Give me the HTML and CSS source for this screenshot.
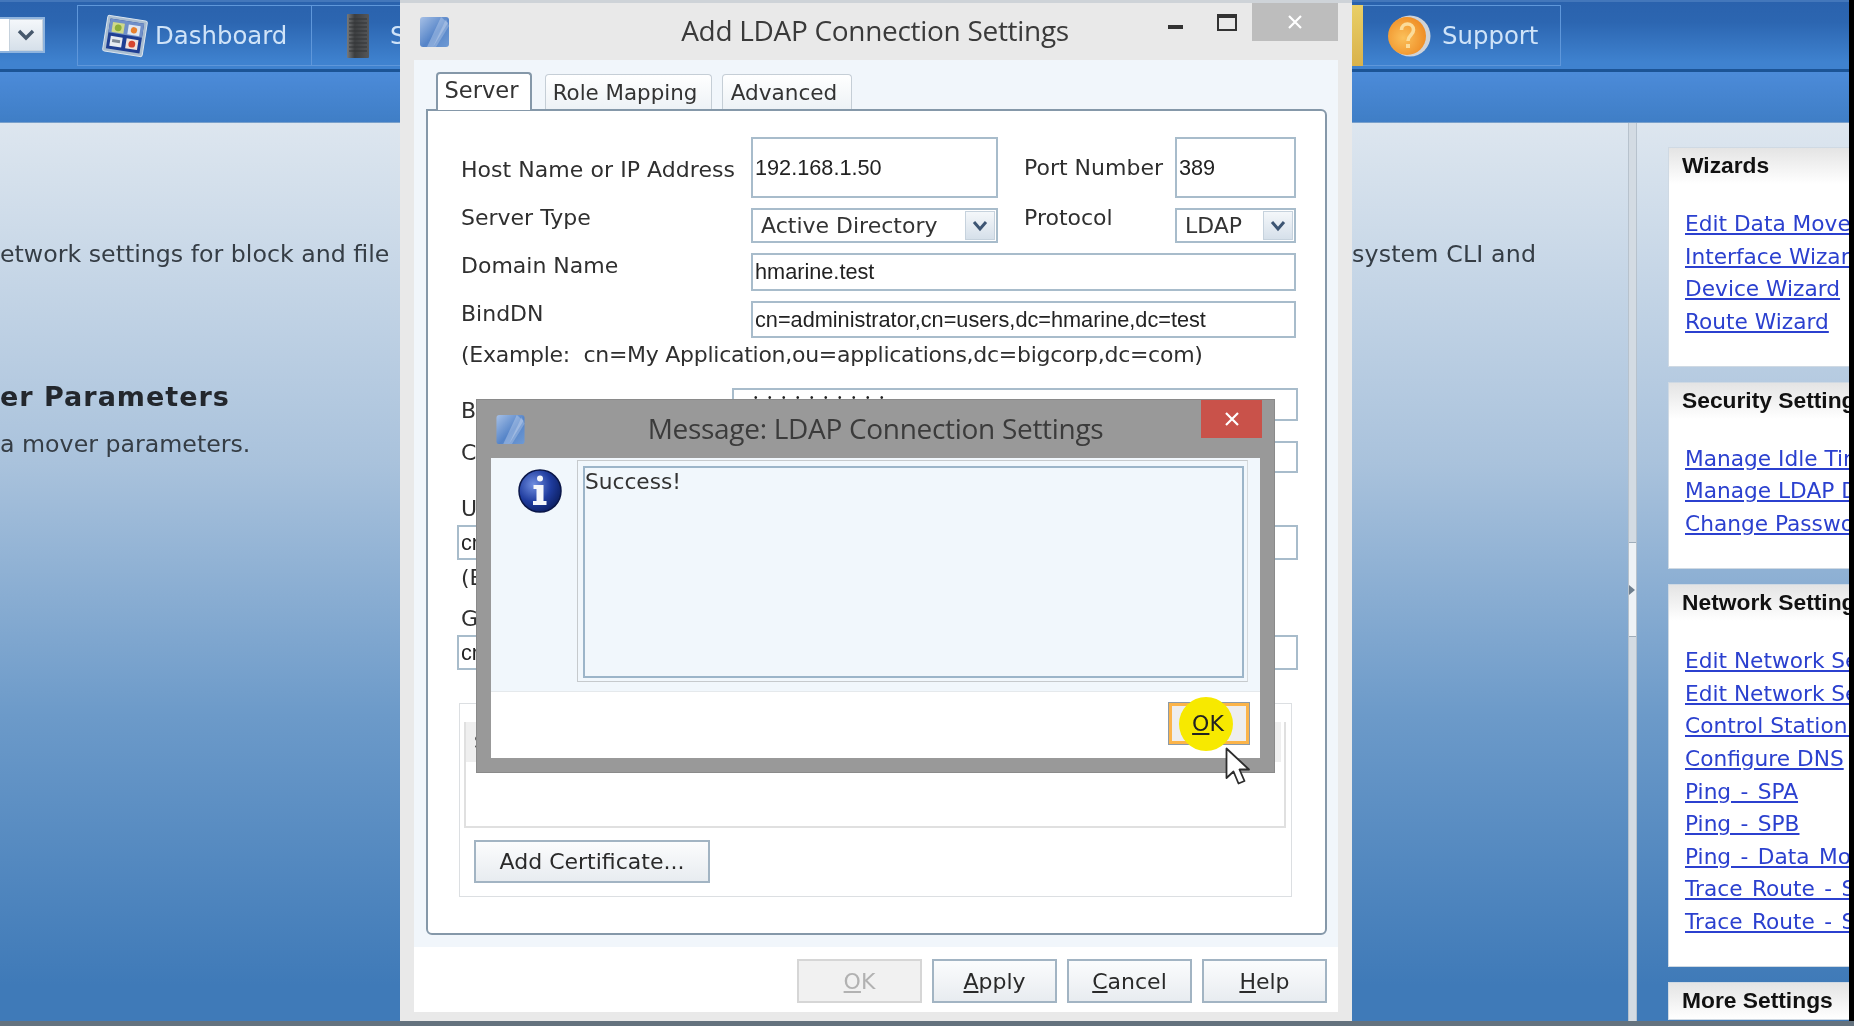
FILE: index.html
```html
<!DOCTYPE html>
<html lang="en">
<head>
<meta charset="utf-8">
<title>Add LDAP Connection Settings</title>
<link rel="stylesheet" href="styles.css">
</head>
<body>
<div class="desktop">
  <div class="stage">
    <div class="screen">
      <header class="topbar">
        <div class="combo"><span class="combo-field"></span><span class="arrow-btn combo-btn"><svg width="18" height="12" viewBox="0 0 18 12"><path d="M2 2l7 7 7-7" fill="none" stroke="#46586c" stroke-width="3.4"/></svg></span></div>
        <nav class="nav">
          <a class="nav-item nav-dash">
            <svg class="nav-icon" width="46" height="46" viewBox="0 0 46 46">
              <g transform="rotate(9 23 23)">
                <rect x="3" y="5" width="40" height="36" rx="2" fill="#a9bdd0" stroke="#dbe5ef"/>
                <rect x="6" y="8" width="34" height="30" fill="#1f3f93"/>
                <rect x="6" y="8" width="34" height="14" fill="#6f8fc8"/>
                <rect x="9" y="11" width="12" height="10" fill="#cfd98a"/><circle cx="15" cy="16" r="3.4" fill="#8cae3a"/>
                <rect x="25" y="11" width="12" height="10" fill="#dfe7f2"/><circle cx="31" cy="16" r="3.2" fill="#e8812f"/>
                <rect x="9" y="25" width="12" height="10" fill="#e6ebf2"/><rect x="11" y="28" width="8" height="3" fill="#7c8796"/>
                <rect x="25" y="25" width="12" height="10" fill="#f0e3dc"/><circle cx="31" cy="30" r="3.4" fill="#d8472f"/>
              </g>
            </svg>
            <span>Dashboard</span>
          </a>
          <a class="nav-item nav-storage">
            <svg class="nav-icon" width="24" height="46" viewBox="0 0 24 46">
              <defs><linearGradient id="srv" x1="0" x2="1" y1="0" y2="0"><stop offset="0" stop-color="#77797b"/><stop offset=".35" stop-color="#3c3e40"/><stop offset="1" stop-color="#55575a"/></linearGradient></defs>
              <rect x="1" y="1" width="22" height="44" rx="1" fill="url(#srv)"/>
              <path d="M3 6h18M3 10h18M3 14h18M3 18h18M3 22h18M3 26h18M3 30h18M3 34h18M3 38h18" stroke="#333537" stroke-width="1"/>
            </svg>
            <span>Storage</span>
          </a>
          <span class="nav-active-edge"></span>
          <a class="nav-item nav-support">
            <svg class="nav-icon" width="44" height="44" viewBox="0 0 44 44">
              <defs><radialGradient id="sup" cx=".4" cy=".55" r=".65"><stop offset="0" stop-color="#fbc05a"/><stop offset="1" stop-color="#ee8a22"/></radialGradient></defs>
              <circle cx="23" cy="22" r="20.5" fill="#cfd3d8"/>
              <circle cx="20" cy="22" r="19" fill="url(#sup)"/>
              <path d="M14.5 16c0-8 12-8 12 0 0 5-5.500 5-5.500 11" fill="none" stroke="#fbdc9a" stroke-width="3.600"/>
              <rect x="19" y="30" width="4" height="4" fill="#fbdc9a"/>
            </svg>
            <span>Support</span>
          </a>
        </nav>
      </header>
      <div class="subbar"></div>
      <main class="main">
        <section class="content">
          <div class="content-left">
            <p class="desc desc-top">etwork settings for block and file</p>
            <h2 class="heading">er Parameters</h2>
            <p class="desc">a mover parameters.</p>
          </div>
          <div class="content-right">
            <p class="desc desc-top">system CLI and</p>
          </div>
        </section>
        <div class="splitter"><span class="splitter-handle"><i class="splitter-arrow"></i></span></div>
        <aside class="side">
          <section class="panel">
            <h3 class="panel-title">Wizards</h3>
            <ul class="links">
              <li><a>Edit Data Mover Names</a></li>
              <li><a>Interface Wizard</a></li>
              <li><a>Device Wizard</a></li>
              <li><a>Route Wizard</a></li>
            </ul>
          </section>
          <section class="panel">
            <h3 class="panel-title">Security Settings</h3>
            <ul class="links">
              <li><a>Manage Idle Timeout</a></li>
              <li><a>Manage LDAP Domain</a></li>
              <li><a>Change Password</a></li>
            </ul>
          </section>
          <section class="panel">
            <h3 class="panel-title">Network Settings</h3>
            <ul class="links">
              <li><a>Edit Network Settings - SPA</a></li>
              <li><a>Edit Network Settings - SPB</a></li>
              <li><a>Control Station Properties</a></li>
              <li><a>Configure DNS</a></li>
              <li class="spaced"><a>Ping - SPA</a></li>
              <li class="spaced"><a>Ping - SPB</a></li>
              <li class="spaced"><a>Ping - Data Mover</a></li>
              <li class="spaced"><a>Trace Route - SPA</a></li>
              <li class="spaced"><a>Trace Route - SPB</a></li>
            </ul>
          </section>
          <section class="panel">
            <h3 class="panel-title">More Settings</h3>
          </section>
        </aside>
      </main>
    </div>
    <div class="edge"></div>
  </div>
  <div class="statusbar"></div>

  <div class="window ldap-window">
    <div class="titlebar">
      <svg class="app-icon" width="31" height="32" viewBox="0 0 31 32">
        <defs><linearGradient id="ico" x1="0" y1="0" x2="1" y2="1"><stop offset="0" stop-color="#a6c0e6"/><stop offset=".55" stop-color="#5584c8"/><stop offset="1" stop-color="#6f9ad4"/></linearGradient></defs>
        <rect x="1" y="1" width="29" height="30" rx="3" fill="url(#ico)"/>
        <path d="M22 1L8 31h6L29 7z" fill="#dfeaf8" opacity=".32"/>
        <path d="M27 3L14 31h3L30 10z" fill="#eef4fb" opacity=".25"/>
      </svg>
      <div class="window-title">Add LDAP Connection Settings</div>
      <div class="controls">
        <span class="ctl-min"></span>
        <span class="ctl-max"></span>
        <span class="ctl-close"><svg width="18" height="18" viewBox="0 0 18 18"><path d="M3 3l12 12M15 3L3 15" stroke="#fff" stroke-width="2.200"/></svg></span>
      </div>
    </div>
    <div class="window-body">
      <div class="tabs">
        <span class="tab tab-active">Server</span>
        <span class="tab tab-role">Role Mapping</span>
        <span class="tab tab-adv">Advanced</span>
      </div>
      <div class="tabpane">
        <div class="form-grid">
          <label class="lbl lbl-host">Host Name or IP Address</label>
          <div class="field">192.168.1.50</div>
          <label class="lbl lbl-port">Port Number</label>
          <div class="field">389</div>

          <label class="lbl lbl-up">Server Type</label>
          <div class="select"><span>Active Directory</span><span class="arrow-btn"><svg width="16" height="12" viewBox="0 0 16 12"><path d="M2 2l6 7 6-7" fill="none" stroke="#3d5573" stroke-width="3"/></svg></span></div>
          <label class="lbl lbl-up lbl-proto">Protocol</label>
          <div class="select"><span>LDAP</span><span class="arrow-btn"><svg width="16" height="12" viewBox="0 0 16 12"><path d="M2 2l6 7 6-7" fill="none" stroke="#3d5573" stroke-width="3"/></svg></span></div>

          <label class="lbl lbl-mid">Domain Name</label>
          <div class="field span3">hmarine.test</div>

          <label class="lbl lbl-mid">BindDN</label>
          <div class="field span3">cn=administrator,cn=users,dc=hmarine,dc=test</div>
        </div>
        <p class="lbl example">(Example:&nbsp; cn=My Application,ou=applications,dc=bigcorp,dc=com)</p>
        <div class="pw-row pw-row-first">
          <label class="lbl">BindDN Password</label>
          <div class="field field-dots">••••••••••</div>
        </div>
        <div class="pw-row pw-row-second">
          <label class="lbl">Confirm Password</label>
          <div class="field"></div>
        </div>
        <label class="lbl lbl-user">User Search Path</label>
        <div class="field wide">cn=users,dc=hmarine,dc=test</div>
        <p class="lbl lbl-ex">(Example: cn=users,dc=bigcorp,dc=com)</p>
        <label class="lbl lbl-group">Group Search Path</label>
        <div class="field wide">cn=users,dc=hmarine,dc=test</div>
        <fieldset class="group">
          <div class="table">
            <div class="table-head">Subject</div>
          </div>
          <button class="btn btn-cert">Add Certificate...</button>
        </fieldset>
      </div>
    </div>
    <footer class="window-footer">
      <button class="btn btn-foot btn-disabled"><u>O</u>K</button>
      <button class="btn btn-foot"><u>A</u>pply</button>
      <button class="btn btn-foot"><u>C</u>ancel</button>
      <button class="btn btn-foot"><u>H</u>elp</button>
    </footer>
  </div>

  <div class="window msg-window">
    <div class="msg-titlebar">
      <svg class="app-icon msg-icon" width="31" height="31" viewBox="0 0 31 32">
        <rect x="1" y="1" width="29" height="30" rx="3" fill="url(#ico)"/>
        <path d="M22 1L8 31h6L29 7z" fill="#dfeaf8" opacity=".32"/>
        <path d="M27 3L14 31h3L30 10z" fill="#eef4fb" opacity=".25"/>
      </svg>
      <div class="msg-title">Message: LDAP Connection Settings</div>
      <div class="msg-controls">
        <span class="msg-close"><svg width="18" height="18" viewBox="0 0 18 18"><path d="M3 3l12 12M15 3L3 15" stroke="#fff" stroke-width="2.200"/></svg></span>
      </div>
    </div>
    <div class="msg-upper">
      <div class="msg-iconcol">
        <svg width="44" height="44" viewBox="0 0 44 44">
          <defs><radialGradient id="inf" cx=".35" cy=".35" r=".75"><stop offset="0" stop-color="#6f8ee0"/><stop offset=".55" stop-color="#1f3c9e"/><stop offset="1" stop-color="#0a1c5c"/></radialGradient></defs>
          <circle cx="22" cy="22" r="21" fill="url(#inf)" stroke="#0a1648" stroke-width="1.500"/>
          <circle cx="22" cy="9.500" r="3" fill="#f4f7fb"/>
          <path d="M15.500 16h10v16h3v4h-13.500v-4h3.500v-12h-3z" fill="#f4f7fb"/>
        </svg>
      </div>
      <div class="msg-textwrap"><div class="msg-text">Success!</div></div>
    </div>
    <div class="msg-lower">
      <button class="btn-ok">
        <span class="halo"></span>
        <span class="btn-ok-label"><u>O</u>K</span>
      </button>
    </div>
  </div>

  <svg class="cursor" width="28" height="42" viewBox="0 0 28 42">
    <path d="M1.500 1.500V31l7-6.500 5 12 6-2.500-5-11.500H24z" fill="#fff" stroke="#2d2d2d" stroke-width="1.800" stroke-linejoin="round"/>
  </svg>
</div>
</body>
</html>
```

FILE: styles.css
```css
* { box-sizing: border-box; }
html, body { margin: 0; padding: 0; height: 100%; overflow: hidden; background: #000; }
p, h2, h3, ul { margin: 0; padding: 0; }
li { list-style: none; }

.desktop {
  position: relative;
  width: 1854px;
  height: 1026px;
  display: flex;
  flex-direction: column;
  overflow: hidden;
  font-family: "DejaVu Sans", sans-serif;
  color: #333;
  filter: blur(0.55px);
}

.stage { flex: 1; display: flex; min-height: 0; }
.screen { flex: 1; display: flex; flex-direction: column; min-width: 0; }
.edge { width: 5px; background: #000; }
.statusbar { height: 5px; background: #64727e; }

/* ---- top navigation ---- */
.topbar {
  height: 72px;
  flex: none;
  display: flex;
  align-items: flex-start;
  background: linear-gradient(#2a62ad 0, #2c66b1 30%, #3f82cf 90%);
  border-top: 2px solid #4377bb;
  border-bottom: 3px solid #1c5496;
}
.combo { width: 45px; height: 36px; margin-top: 15px; display: flex; border: 2px solid #8fb4de; border-left: 0; background: #fff; }
.combo-field { width: 9px; background: #fff; }
.combo-btn { flex: 1; margin: 0; width: auto; height: auto; background: linear-gradient(#f2f5f9, #cbd8e7); }
.nav { display: flex; margin-left: 32px; flex: 1; margin-top: 3px; align-items: stretch; height: 61px; }
.nav-item {
  display: flex;
  align-items: center;
  color: #cfe3f8;
  font-size: 24.4px;
  border: 1px solid #5f97da;
}
.nav-icon { flex: none; }
.nav-dash { width: 235px; padding-left: 24px; gap: 7px; }
.nav-storage { width: 1040px; padding-left: 34px; gap: 20px; border-left: 0; border-right: 0; }
.nav-active-edge { width: 11px; background: linear-gradient(#e9cf66, #d9b24c); }
.nav-support { width: 198px; padding-left: 24px; gap: 11px; border-left: 0; }

.subbar {
  height: 51px;
  flex: none;
  background: linear-gradient(#4c8bd9, #3f7ec6);
  border-bottom: 1px solid #78a0cc;
}

/* ---- main area ---- */
.main {
  flex: 1;
  min-height: 0;
  display: flex;
  background: linear-gradient(#dde6ef 0, #a9c2dc 38%, #6c9ac9 66%, #3f7ab8 96%);
}
.content { width: 1628px; flex: none; display: flex; padding-top: 114px; }
.content-left { width: 400px; flex: none; }
.content-right { margin-left: 952px; }
.desc { font-size: 23.7px; line-height: 34px; white-space: nowrap; color: #353d45; }
.content-right .desc { letter-spacing: 0.15px; }
.heading { font-size: 27px; letter-spacing: 1px; line-height: 36px; margin-top: 108px; margin-bottom: 12px; color: #23272d; white-space: nowrap; }

.splitter {
  width: 9px;
  flex: none;
  display: flex;
  align-items: flex-start;
  background: #d3dbe3;
  border-left: 1px solid #b7c2cd;
  border-right: 1px solid #b7c2cd;
}
.splitter-handle {
  margin-top: 419px;
  width: 100%;
  height: 95px;
  display: flex;
  align-items: center;
  background: #eef2f6;
  border-top: 1px solid #9fadba;
  border-bottom: 1px solid #9fadba;
}
.splitter-arrow { width: 0; height: 0; border-left: 6px solid #6f7f8e; border-top: 5px solid transparent; border-bottom: 5px solid transparent; }

.side { flex: 1; min-width: 0; padding: 24px 0 0 31px; overflow: hidden; display: flex; flex-direction: column; gap: 15px; }
.panel { width: 320px; flex: none; background: #fff; border: 1px solid #cfd9e3; }
.panel-title {
  height: 36px;
  padding-left: 13px;
  font: bold 22.8px/35px "Liberation Sans", sans-serif;
  color: #111;
  background: linear-gradient(#e4e4e4, #fff);
  white-space: nowrap;
}
.links { padding: 24px 0 27.5px 16px; }
.links li { height: 32.6px; line-height: 32px; white-space: nowrap; font-size: 21.7px; }
.links .spaced { word-spacing: 2.5px; }
.links a { color: #2b40cf; text-decoration: underline; }

/* ---- windows ---- */
.window { position: absolute; }
.ldap-window {
  left: 400px;
  top: 0;
  width: 952px;
  height: 1021px;
  background: #e9e9e9;
  border-top: 3px solid #ced3d8;
  padding: 0 14px 8px;
  display: flex;
  flex-direction: column;
}
.titlebar { height: 57px; flex: none; margin: 0 -14px; padding: 0 14px 0 19px; display: grid; grid-template-columns: 1fr auto 1fr; align-items: center; }
.app-icon { flex: none; }
.window-title { font: 28px/1 "Open Sans", sans-serif; color: #3a3a3a; letter-spacing: -0.3px; white-space: nowrap; padding: 0 7px 3px 0; }
.controls { display: flex; justify-content: flex-end; align-items: flex-start; align-self: start; }
.ctl-min { width: 15px; height: 4px; margin: 22px 34px 0 0; background: #333; }
.ctl-max { width: 20px; height: 17px; margin: 11px 15px 0 0; border: 2px solid #333; border-top-width: 4px; }
.ctl-close { width: 86px; height: 38px; background: #bdbdbd; display: flex; align-items: center; justify-content: center; }

.window-body { flex: none; height: 887px; padding: 12px 11px 0 12px; background: #f1f6fb; }
.tabs { display: flex; margin-left: 10px; align-items: flex-end; height: 38px; position: relative; z-index: 1; }
.tab {
  display: block;
  height: 35px;
  margin-bottom: 1px;
  font-size: 21.6px;
  line-height: 36px;
  text-align: center;
  color: #333;
  background: linear-gradient(#fff, #eef2f6);
  border: 1px solid #c5ced6;
  border-bottom: 0;
  border-radius: 4px 4px 0 0;
}
.tab-active { width: 96px; height: 38px; margin-bottom: 0; font-size: 22.6px; line-height: 32px; padding-right: 5px; background: #fff; border: 2px solid #8598a9; border-bottom: 0; }
.tab-role { width: 167px; margin-left: 13px; padding-right: 7px; font-size: 21.4px; }
.tab-adv { width: 130px; margin-left: 10px; padding-right: 6px; }
.tabpane {
  height: 826px;
  margin-top: -1px;
  padding-left: 29px;
  background: #fff;
  border: 2px solid #8598a9;
  border-radius: 0 6px 6px 6px;
}

.form-grid {
  margin-top: 26px;
  display: grid;
  grid-template-columns: 294px 247px 177px 121px;
  grid-template-rows: 61px 35px 38px 37px;
  row-gap: 10px;
}
.lbl { display: block; font-size: 22px; line-height: 30px; color: #2f2f2f; padding-left: 4px; white-space: nowrap; }
.lbl-host { margin-top: 18px; letter-spacing: 0.05px; }
.lbl-port { margin-top: 16px; padding-left: 26px; }
.lbl-up { margin-top: -5px; }
.lbl-proto { padding-left: 26px; }
.lbl-mid { margin-top: -2px; }
.field {
  border: 2px solid #a8bccb;
  background: #fff;
  font: 21.7px/1 "Liberation Sans", sans-serif;
  color: #222;
  padding-left: 2px;
  display: flex;
  align-items: center;
  white-space: nowrap;
  overflow: hidden;
}
.span3 { grid-column: span 3; }
.select {
  border: 2px solid #a8bccb;
  background: #fff;
  font-size: 22px;
  padding: 1px 1px 1px 8px;
  display: flex;
  justify-content: space-between;
  align-items: center;
  color: #333;
}
.arrow-btn {
  width: 30px;
  height: 100%;
  display: flex;
  align-items: center;
  justify-content: center;
  background: linear-gradient(#f4f7fa, #d6e0ea);
  border: 1px solid #c6d2dd;
}

.example { margin-top: 2px; letter-spacing: -0.27px; }
.pw-row { display: grid; grid-template-columns: 275px 566px; }
.pw-row-first { margin-top: 18px; height: 33px; }
.pw-row-second { margin-top: 20px; height: 32px; }
.pw-row .lbl { margin-top: 8px; overflow: hidden; }
.pw-row-second .lbl { margin-top: -3px; }
.field-dots { align-items: flex-start; line-height: 12px; letter-spacing: 10.5px; font-size: 10px; padding: 2px 0 0 20px; }
.lbl-user { margin-top: 21px; }
.wide { width: 841px; height: 35px; margin-top: 1px; }
.lbl-ex { margin-top: 3px; }
.lbl-group { margin-top: 11px; }

.group {
  margin: 33px 0 0 2px;
  width: 833px;
  height: 194px;
  padding: 18px 0 0 4px;
  border: 1px solid #dcdfe2;
}
.table { width: 822px; height: 106px; border: 2px solid #e0e0e0; border-top: 0; }
.table-head { width: 815px; height: 40px; background: #efefef; font-size: 18px; line-height: 40px; padding-left: 8px; color: #333; }
.btn {
  font-family: "DejaVu Sans", sans-serif;
  font-size: 22px;
  color: #2a2a2a;
  background: linear-gradient(#fbfcfd, #e8ecf0);
  border: 2px solid #a2b4c3;
  padding: 0;
}
.btn-cert { display: block; width: 236px; height: 43px; margin: 12px 0 0 10px; }

.window-footer { flex: none; height: 65px; background: #fff; padding: 12px 11px 0 0; display: flex; justify-content: flex-end; gap: 10px; }
.btn-foot { width: 125px; height: 44px; }
.btn-disabled { color: #b2b2b2; border-color: #d6d6d6; background: #f1f1f1; }

/* ---- message ---- */
.msg-window {
  left: 476px;
  top: 399px;
  width: 799px;
  height: 374px;
  background: #999;
  border: 1px solid #8a8a8a;
  padding: 0 14px 14px;
  display: flex;
  flex-direction: column;
}
.msg-titlebar { height: 58px; flex: none; margin: 0 -14px; padding: 0 12px 0 18px; display: grid; grid-template-columns: 1fr auto 1fr; align-items: center; }
.msg-title { font: 28px/1 "Open Sans", sans-serif; color: #3b3b3b; letter-spacing: -0.3px; white-space: nowrap; padding: 0 6px 3px 0; }
.msg-controls { display: flex; justify-content: flex-end; align-self: start; }
.msg-close { width: 61px; height: 38px; background: #c9524a; display: flex; align-items: center; justify-content: center; }
.msg-upper { height: 234px; flex: none; display: flex; background: #f1f7fc; border-bottom: 1px solid #e5e9ec; padding-top: 2px; }
.msg-iconcol { width: 86px; flex: none; padding: 9px 0 0 27px; }
.msg-textwrap { width: 671px; height: 222px; padding: 5px 3px 3px 5px; border-top: 1px solid #c6cacd; border-left: 1px solid #c6cacd; border-right: 1px solid #d5d9dc; border-bottom: 1px solid #c6cacd; }
.msg-text { height: 100%; border: 2px solid #9cb5c9; font-size: 21.7px; line-height: 28px; color: #333; }
.msg-lower { flex: 1; background: #fff; display: flex; justify-content: flex-end; align-items: flex-start; padding: 10px 10px 0 0; }
.btn-ok {
  position: relative;
  width: 82px;
  height: 43px;
  padding: 0;
  background: #eee;
  border: 1px solid #8d9aa6;
  outline: 3px solid #fbb44a;
  outline-offset: -4px;
  font-family: "DejaVu Sans", sans-serif;
  font-size: 22px;
  color: #222;
}
.halo { position: absolute; left: 10px; top: -6px; width: 54px; height: 54px; border-radius: 50%; background: #f7e900; }
.btn-ok-label { position: relative; margin-right: 2px; }

.cursor { position: absolute; left: 1225px; top: 747px; }
```
